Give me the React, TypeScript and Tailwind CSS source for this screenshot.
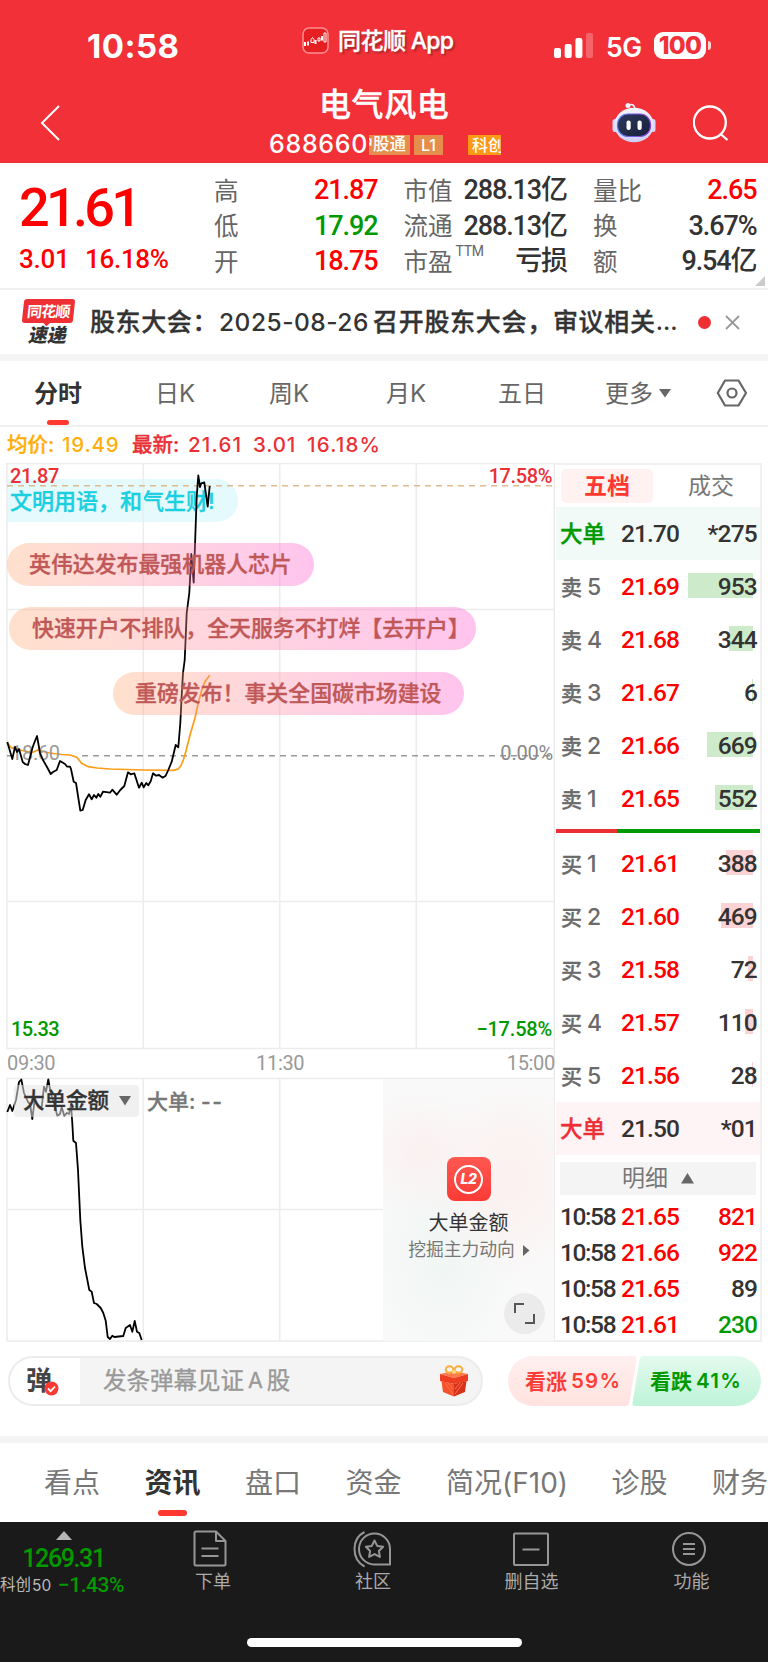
import React from "react";

const PRICE =
  "7.3,742 12.3,759 15,747 17,752 19,749 22.7,762 25,764 28,765 32.7,747 35,741 37,736 40,753 43,760 47,767 50.7,774 53,772 56.7,770 60,761 65,764 67,766.5 70,766.7 71,769 73.7,781.7 76,783 80.3,810.7 82.7,810 85.7,800 89,794.3 91.7,799.3 94,795 96.3,797.7 98.3,794 100.3,796.7 103,791.7 110,792.7 112.3,789.7 116.7,794.7 120.3,790 124.3,786 128,772.3 130.7,774.3 134.3,773.3 139,787.7 141.7,782.7 143.7,787.3 146.3,783 148.3,785.3 150.7,781.3 153,773.3 156,775.7 159,775 162.7,777.7 165.7,775.7 168.3,770 171.7,761.7 175.7,745 178.3,747.3 180.3,723.3 182,690 183,673 184.7,660 186.7,613 189.3,593 191.3,554 193.7,582.7 195.3,536.7 196.7,496.7 198.3,475.3 200,487 201.3,483.3 204.3,482.3 207.7,506.7 209.7,486";
const AVG =
  "7.3,743 11.7,748 20,750 31.7,752.7 38,750 45,752 53,753.5 62,754.5 70,755 76.7,757.3 81.7,763.3 88.3,766.7 97,768 110,769 143.3,770 173.3,770.3 178.3,769 181,765.5 183.3,760 186,751 190,735 195,718 198,704 201.7,690 205,681.7 209.7,675.3";
const BIG =
  "7.3,1112 10,1105 12.3,1111 16,1100 19,1082 21.3,1079.5 24,1093 28,1102 30,1104 32.3,1119 34.7,1100 39.3,1107 41.7,1107 44,1086.7 46,1091.7 48.3,1079.5 50.7,1093 55,1106.7 57.3,1115.7 60,1114 61.7,1107 64.3,1116 66.7,1113 69,1114 71,1105 72.3,1123 73.3,1140.7 76,1143 78,1170 80.3,1220 82.3,1246.7 85,1268 89.3,1290 91.7,1291.7 94,1303 96.7,1304 100.7,1308 103.3,1313 105.7,1320.7 107.7,1337 110,1339 112.3,1335.7 114.3,1337 123.3,1336 125.7,1328 130,1325 132.3,1331.7 134.7,1321 137,1331.7 139.3,1333 141.7,1340";

const DIN = "font-['Roboto','Noto_Sans_CJK_SC',sans-serif]";
const MID = "[-webkit-text-stroke:0.35px_currentColor]";

function Header() {
  return (
    <header className="flex h-[163px] flex-col bg-[#f23038] text-white">
      <div className="flex h-[84px] items-center pt-[3px]">
        <div className="mt-[5px] ml-[87px] w-[215px] text-[33px] leading-none font-bold tracking-[0.500px]">10:58</div>
        <svg className="-mt-[6px]" width="27" height="27" viewBox="0 0 27 27">
          <rect x="1" y="1" width="25" height="25" rx="6" fill="#e61f23" stroke="#ff8f90" strokeWidth="1.5" />
          <path d="M3 15v4M6 14.500v4M20 9v4.500" stroke="#fff" strokeWidth="2" />
          <path d="M9 12.500l1.500-2 1.500 2v3H9zM16 11h2v3h-2zM22 6h2v9h-2z" fill="none" stroke="#fff" strokeWidth="1" />
          <path d="M13.500 13v4" stroke="#fff" strokeWidth="2" />
        </svg>
        <div className={`-mt-[4px] ml-[9px] flex w-[216px] items-center gap-[5px] text-[23px] leading-none font-medium whitespace-nowrap [text-shadow:2px_2px_2px_#7a2424aa] ${MID}`}>
          <span className="tracking-[-0.400px]">同花顺</span>
          <span className="tracking-[-0.800px]">App</span>
        </div>
        <svg className="mt-[4px]" width="40" height="26" viewBox="0 0 40 26">
          <rect x="0" y="15" width="7" height="10" rx="2" fill="#fff" />
          <rect x="10.700" y="11" width="7" height="14" rx="2" fill="#fff" />
          <rect x="21.400" y="5" width="7" height="20" rx="2" fill="#fff" />
          <rect x="32" y="0" width="7" height="25" rx="2" fill="#fff" fillOpacity="0.250" />
        </svg>
        <div className="mt-[7px] ml-[12px] w-[48px] text-[26.500px] leading-none font-semibold tracking-[-0.500px]">5G</div>
        <div className="mt-[4px] flex h-[27px] w-[52px] items-center justify-center rounded-[9px] bg-white text-[24.500px] leading-none font-extrabold tracking-[-0.800px] text-[#f23038]">100</div>
        <div className="mt-[4px] ml-[2px] h-[9px] w-[3px] rounded-r-full bg-white/80" />
      </div>
      <div className="flex h-[79px] items-start">
        <svg className="mt-[21px] ml-[40px]" width="20" height="36" viewBox="0 0 20 36" fill="none" stroke="#fff" strokeWidth="2">
          <path d="M19 1L2 18l17 17" />
        </svg>
        <div className="ml-[209px] flex w-[343px] flex-col">
          <div className={`ml-[50px] h-[40px] text-[32px] leading-[41px] font-medium tracking-[0.600px] whitespace-nowrap ${MID}`}>电气风电</div>
          <div className="mt-[8px] flex h-[25px] items-center">
            <span className="w-[100px] text-[25px] leading-none font-medium tracking-[0.700px]">688660</span>
            <span className="flex h-[20px] w-[41px] items-center justify-end overflow-hidden bg-[#e58d4a] pr-[4px] text-[16.500px] leading-none font-medium whitespace-nowrap">沪股通</span>
            <span className="ml-[4px] flex h-[20px] w-[29px] items-center justify-center bg-[#e58d4a] text-[16px] leading-none font-medium">L1</span>
            <span className="ml-[25px] flex h-[20px] w-[33px] items-center overflow-hidden bg-[#fd9a14] pl-[4px] text-[16px] leading-none font-medium whitespace-nowrap">科创</span>
          </div>
        </div>
        <svg className="mt-[17px]" width="44" height="42" viewBox="0 0 44 42">
          <defs>
            <linearGradient id="face" x1="0" y1="0" x2="1" y2="1">
              <stop offset="0" stopColor="#2f3a5c" />
              <stop offset="1" stopColor="#161f3b" />
            </linearGradient>
            <linearGradient id="rim" x1="0" y1="0" x2="1" y2="0">
              <stop offset="0" stopColor="#5a7bf0" />
              <stop offset="1" stopColor="#8a3fd8" />
            </linearGradient>
            <linearGradient id="shell" x1="0" y1="0" x2="0" y2="1">
              <stop offset="0" stopColor="#f6f6ff" />
              <stop offset="1" stopColor="#cfd0f6" />
            </linearGradient>
          </defs>
          <path d="M17 4q5-2 6 4" fill="none" stroke="#eef" strokeWidth="1.600" />
          <circle cx="16" cy="4.500" r="2.500" fill="#f3f3ff" />
          <rect x="0.500" y="18" width="5" height="13" rx="2.500" fill="#d5d7f8" />
          <rect x="38.500" y="18" width="5" height="13" rx="2.500" fill="#d5d7f8" />
          <ellipse cx="22" cy="24" rx="19.800" ry="17.200" fill="url(#shell)" />
          <rect x="5.500" y="13" width="33" height="22.500" rx="10.500" fill="url(#face)" stroke="url(#rim)" strokeWidth="1.200" />
          <rect x="14.500" y="19.500" width="4.200" height="9.500" rx="2" fill="#fff" />
          <rect x="25.500" y="19.500" width="4.200" height="9.500" rx="2" fill="#fff" />
        </svg>
        <svg className="mt-[20px] ml-[37px]" width="38" height="38" viewBox="0 0 38 38" fill="none" stroke="#fff" strokeWidth="2.300">
          <circle cx="16.800" cy="18.500" r="16" />
          <path d="M27 29.500l7.500 6.500" />
        </svg>
      </div>
    </header>
  );
}

type Stat = { k: string; v: string; c: string; sup?: string };
const STATS: Stat[][] = [
  [
    { k: "高", v: "21.87", c: "text-[#ff0000]" },
    { k: "低", v: "17.92", c: "text-[#009a00]" },
    { k: "开", v: "18.75", c: "text-[#ff0000]" },
  ],
  [
    { k: "市值", v: "288.13亿", c: "text-[#333]" },
    { k: "流通", v: "288.13亿", c: "text-[#333]" },
    { k: "市盈", v: "亏损", c: "text-[#333]", sup: "TTM" },
  ],
  [
    { k: "量比", v: "2.65", c: "text-[#ff0000]" },
    { k: "换", v: "3.67%", c: "text-[#333]" },
    { k: "额", v: "9.54亿", c: "text-[#333]" },
  ],
];

function Quote() {
  return (
    <section className="relative flex h-[127px] border-b-2 border-[#efefef]">
      <div className={`ml-[19px] w-[195px] text-[#ff0000] ${DIN}`}>
        <div className="mt-[18px] h-[54px] text-[54px] leading-[54px] font-medium tracking-[-3.700px]">21.61</div>
        <div className="mt-[10px] flex h-[28px] text-[26px] leading-[28px] font-medium tracking-[-0.300px]">
          <span className="w-[66px]">3.01</span>
          <span>16.18%</span>
        </div>
      </div>
      <div className="mt-[10px] flex gap-[26px]">
        {STATS.map((col, i) => (
          <div key={i} className="w-[163.500px]">
            {col.map((s) => (
              <div key={s.k} className="flex h-[35.500px] items-center justify-between whitespace-nowrap">
                <span className="flex text-[24.500px] leading-none text-[#666]">
                  {s.k}
                  {s.sup && <sup className={`top-0 -mt-[6px] ml-[3px] self-start text-[14px] leading-none tracking-[-0.300px] ${DIN}`}>{s.sup}</sup>}
                </span>
                <span className={`text-[27px] leading-none font-medium tracking-[-1.100px] ${DIN} ${s.c}`}>{s.v}</span>
              </div>
            ))}
          </div>
        ))}
      </div>
      <svg className="absolute right-[3px] bottom-[2px]" width="10" height="10" viewBox="0 0 10 10">
        <path d="M10 0v10H0z" fill="#ccc" />
      </svg>
    </section>
  );
}

function News() {
  return (
    <section className="flex h-[71px] items-center border-b-[7px] border-[#f4f4f4] whitespace-nowrap">
      <div className="ml-[21px] flex w-[54px] flex-col items-center">
        <div className="relative flex h-[24px] w-[51px] -skew-x-6 items-center justify-center rounded-[3px] bg-[#ee2f33] text-[15px] leading-none font-bold tracking-[-0.800px] text-white">
          同花顺
          <span className="absolute -bottom-[2px] left-[22px] h-[6px] w-[6px] rotate-45 bg-[#ee2f33]" />
        </div>
        <div className="mt-[4px] -skew-x-12 text-[19px] leading-[18px] font-black text-[#333]">速递</div>
      </div>
      <div className="ml-[15px] flex w-[610px] items-center text-[25px] leading-none font-medium text-[#333]">
        <span className={`w-[129px] tracking-[0.600px] ${MID}`}>股东大会：</span>
        <span className="w-[154px] text-[24.500px] tracking-[0.500px]">2025-08-26</span>
        <span className={`tracking-[0.700px] ${MID}`}>召开股东大会，审议相关</span>
        <span className="text-[24px]">...</span>
      </div>
      <span className="-ml-[2px] h-[13px] w-[13px] rounded-full bg-[#ee3034]" />
      <svg className="ml-[14px]" width="15" height="15" viewBox="0 0 15 15" stroke="#999" strokeWidth="1.800">
        <path d="M1 1l13 13M14 1L1 14" />
      </svg>
    </section>
  );
}

function PeriodTabs() {
  return (
    <nav className="relative flex h-[66px] items-center border-b-2 border-[#f1f1f1] pt-[2px] text-[24px] leading-none whitespace-nowrap text-[#666]">
      <span className="ml-[34px] w-[121px] font-bold text-[#333]">分时</span>
      <span className="w-[114px]">日K</span>
      <span className="w-[117px]">周K</span>
      <span className="w-[112px]">月K</span>
      <span className="w-[107px]">五日</span>
      <span className="w-[54px]">更多</span>
      <svg className="-mt-[2px]" width="12" height="9" viewBox="0 0 12 9"><path d="M0 0h12L6 8.500z" fill="#666" /></svg>
      <svg className="-mt-[2px] ml-[45px]" width="32" height="30" viewBox="0 0 32 30" fill="none" stroke="#666" strokeWidth="2.200" strokeLinejoin="round">
        <path d="M9 2.500h13.500L30 15l-7.500 12.500H9L1.800 15z" />
        <circle cx="16" cy="15" r="4.500" />
      </svg>
      <span className="absolute bottom-0 left-[47px] h-[5px] w-[22px] rounded-full bg-[#ff3830]" />
    </nav>
  );
}

function Summary() {
  return (
    <div className="flex h-[36px] items-center pl-[7px] text-[20.500px] leading-none font-medium whitespace-nowrap text-[#ea3035]">
      <span className={`w-[55px] text-[#ffae0a] ${MID}`}>均价:</span>
      <span className="w-[70px] tracking-[0.800px] text-[#ffae0a]">19.49</span>
      <span className={`w-[56px] ${MID}`}>最新:</span>
      <span className="w-[65px] tracking-[1.200px]">21.61</span>
      <span className="w-[54px] tracking-[0.800px]">3.01</span>
      <span className="tracking-[1.200px]">16.18%</span>
    </div>
  );
}

function Bubble({ className, children }: { className: string; children: React.ReactNode }) {
  return (
    <div className={`absolute flex h-[43px] items-center rounded-full bg-linear-to-r from-[#ffa66d]/35 to-[#ff56ce]/35 text-[21.900px] leading-none font-medium whitespace-nowrap text-[#c05858] ${MID} ${className}`}>
      {children}
    </div>
  );
}

function Chart() {
  return (
    <div className="relative h-[880px] w-[555px] shrink-0">
      <div className={`absolute top-[16px] left-[7px] flex h-[43px] w-[231px] items-center rounded-r-full bg-[#e5fafd] pl-[3px] text-[22px] leading-none font-medium whitespace-nowrap text-[#19cfe0] ${MID}`}>
        文明用语，和气生财!
      </div>
      <svg className="absolute top-0 left-0" width="555" height="880" viewBox="0 463 555 880" fill="none">
        <g stroke="#ececec" strokeWidth="1.500">
          <path d="M6.500 463.500H555M6.500 609.500H554M6.500 901.500H554M6.500 1048.500H554M6.500 1078.500H554M6.500 1209.500H554M6.500 1341H555" />
          <path d="M7 463v585.500M143.300 463v585.500M279.700 463v585.500M416.300 463v585.500M7 1078v263M143.300 1078v263M279.700 1078v263" />
          <path d="M554.500 463v879" strokeWidth="2" />
        </g>
        <path d="M7 485.800H552" stroke="#deba90" strokeWidth="1.500" strokeDasharray="6 5" />
        <path d="M7 755.700H16M82 755.700H552" stroke="#999" strokeWidth="1.500" strokeDasharray="6 5" />
        <polyline points={AVG} stroke="#fd9c17" strokeWidth="1.700" />
      </svg>
      <div className={`text-[20px] leading-none font-medium ${DIN}`}>
        <span className="absolute top-[3px] left-[10px] tracking-[-0.400px] text-[#ea3035]">21.87</span>
        <span className="absolute top-[3px] right-[3px] tracking-[-0.400px] text-[#ea3035]">17.58%</span>
        <span className="absolute top-[280px] left-[11px] font-normal tracking-[-0.300px] text-[#999]">18.60</span>
        <span className="absolute top-[280px] right-[2px] font-normal tracking-[-0.200px] text-[#888]">0.00%</span>
        <span className="absolute top-[556px] left-[11px] tracking-[-0.600px] text-[#009a00]">15.33</span>
        <span className="absolute top-[556px] right-[3px] tracking-[-0.200px] text-[#009a00]">−17.58%</span>
        <span className="absolute top-[590px] left-[7px] font-normal tracking-[-0.300px] text-[#999]">09:30</span>
        <span className="absolute top-[590px] left-[256px] font-normal tracking-[-0.300px] text-[#999]">11:30</span>
        <span className="absolute top-[590px] right-0 font-normal tracking-[-0.300px] text-[#999]">15:00</span>
      </div>
      <svg className="absolute top-0 left-0" width="555" height="880" viewBox="0 463 555 880" fill="none" stroke="#000" strokeWidth="1.800" strokeLinejoin="round">
        <polyline points={PRICE} />
        <polyline points={BIG} />
      </svg>
      <Bubble className="top-[80px] left-[7px] w-[307px] pl-[22px]">英伟达发布最强机器人芯片</Bubble>
      <Bubble className="top-[144px] left-[9px] w-[467px] pl-[23px]">快速开户不排队，全天服务不打烊【去开户】</Bubble>
      <Bubble className="top-[209px] left-[113px] w-[351px] pl-[22px]">重磅发布！事关全国碳市场建设</Bubble>
      <div className={`absolute top-[622px] left-[14px] flex h-[32px] w-[125px] items-center rounded-[4px] bg-[#e4e4e4]/55 pl-[9px] text-[21.500px] leading-none font-medium whitespace-nowrap text-[#333] ${MID}`}>
        大单金额
        <svg className="ml-[10px]" width="12" height="10" viewBox="0 0 12 10"><path d="M0 0h12L6 9.500z" fill="#666" /></svg>
      </div>
      <div className={`absolute top-[628px] left-[147px] text-[21px] leading-none font-medium whitespace-nowrap text-[#777] ${MID}`}>大单: <span className="tracking-[1.500px]">--</span></div>
      <Promo />
    </div>
  );
}

function Promo() {
  return (
    <div className="absolute top-[616px] left-[383px] flex h-[262px] w-[171px] flex-col items-center overflow-hidden bg-[#f9f9f9] bg-[radial-gradient(circle_at_22%_28%,#fbf1f1_0,transparent_28%),radial-gradient(ellipse_at_75%_38%,#fcf0ef_0,transparent_45%),radial-gradient(ellipse_at_35%_66%,#f0f6f4_0,transparent_50%)] pt-[78px]">
      <div className="flex h-[44px] w-[44px] items-center justify-center rounded-[8px] bg-linear-to-b from-[#ff5751] to-[#fb3a35]">
        <div className="flex h-[29px] w-[29px] items-center justify-center rounded-full border-2 border-white text-[14px] leading-none font-extrabold tracking-[-0.500px] text-white italic">L2</div>
      </div>
      <div className="mt-[11px] text-[20px] leading-[22px] text-[#333]">大单金额</div>
      <div className="mt-[6px] flex items-center pl-[1px] text-[17.800px] leading-[20px] whitespace-nowrap text-[#777]">
        挖掘主力动向
        <svg className="ml-[8px]" width="7" height="11" viewBox="0 0 7 11"><path d="M0 0l6.500 5.500L0 11z" fill="#666" /></svg>
      </div>
      <div className="absolute right-[9px] bottom-[7px] flex h-[41px] w-[41px] items-center justify-center rounded-full bg-[#ebebeb]">
        <svg width="21" height="21" viewBox="0 0 21 21" fill="none" stroke="#555" strokeWidth="2">
          <path d="M1 10V1h9M20 11v9h-9" />
        </svg>
      </div>
    </div>
  );
}

type Level = { k: string; n: string; p: string; v: string; bar: number };
const SELL: Level[] = [
  { k: "卖", n: "5", p: "21.69", v: "953", bar: 65 },
  { k: "卖", n: "4", p: "21.68", v: "344", bar: 24 },
  { k: "卖", n: "3", p: "21.67", v: "6", bar: 1 },
  { k: "卖", n: "2", p: "21.66", v: "669", bar: 46 },
  { k: "卖", n: "1", p: "21.65", v: "552", bar: 38 },
];
const BUY: Level[] = [
  { k: "买", n: "1", p: "21.61", v: "388", bar: 27 },
  { k: "买", n: "2", p: "21.60", v: "469", bar: 32 },
  { k: "买", n: "3", p: "21.58", v: "72", bar: 5 },
  { k: "买", n: "4", p: "21.57", v: "110", bar: 8 },
  { k: "买", n: "5", p: "21.56", v: "28", bar: 1 },
];

function LevelRow({ l, tint }: { l: Level; tint: string }) {
  return (
    <div className="relative flex h-[53.100px] shrink-0 items-center pt-px pr-[4px] pl-[5px] leading-none font-medium">
      <span className={`w-[26px] text-[21px] text-[#6a6a6a] ${MID}`}>{l.k}</span>
      <span className="w-[34px] text-[23px] text-[#6a6a6a]">{l.n}</span>
      <span className={`flex-1 text-[24.500px] tracking-[-0.900px] text-[#ff0000] ${DIN}`}>{l.p}</span>
      <span className={`absolute top-[13px] right-[7px] h-[25px] ${tint}`} style={{ width: l.bar }} />
      <span className={`relative -mr-px text-[24.500px] tracking-[-0.800px] text-[#333] ${DIN}`}>{l.v}</span>
    </div>
  );
}

function BigRow({ bg, color, p, v }: { bg: string; color: string; p: string; v: string }) {
  return (
    <div className={`flex h-[53px] shrink-0 items-center pt-px pr-[4px] pl-[4px] leading-none font-medium ${bg}`}>
      <span className={`w-[61px] text-[22.500px] ${MID} ${color}`}>大单</span>
      <span className={`flex-1 text-[24.500px] tracking-[-0.900px] text-[#333] ${DIN}`}>{p}</span>
      <span className={`-mr-px text-[24.500px] tracking-[-0.800px] text-[#333] ${DIN}`}>{v}</span>
    </div>
  );
}

const TRADES = [
  { p: "21.65", v: "821", c: "text-[#ff0000]" },
  { p: "21.66", v: "922", c: "text-[#ff0000]" },
  { p: "21.65", v: "89", c: "text-[#333]" },
  { p: "21.61", v: "230", c: "text-[#009a00]" },
];

function OrderBook() {
  return (
    <div className="flex h-[879px] w-[207px] flex-col border-t-2 border-r-2 border-b-2 border-[#f0f0f0] pl-px">
      <div className="flex h-[42px] shrink-0 items-center text-[23px] leading-none">
        <span className="ml-[5px] flex h-[34px] w-[92px] items-center justify-center rounded-[5px] bg-[#fff2f1] font-bold text-[#ff3830]">五档</span>
        <span className="ml-[35px] text-[#777]">成交</span>
      </div>
      <BigRow bg="bg-[#f1faf6]" color="text-[#009a00]" p="21.70" v="*275" />
      {SELL.map((l) => <LevelRow key={l.n} l={l} tint="bg-[#cdebcb]" />)}
      <div className="mt-[3.500px] mb-[4px] flex h-[4px] shrink-0">
        <div className="w-[61px] bg-[#ea3035]" />
        <div className="flex-1 bg-[#009a00]" />
      </div>
      {BUY.map((l) => <LevelRow key={l.n} l={l} tint="bg-[#fbd3d4]" />)}
      <BigRow bg="bg-[#fff4f5]" color="text-[#ea3035]" p="21.50" v="*01" />
      <div className="mt-[7px] mr-[4px] mb-[3px] ml-[4px] flex h-[33px] shrink-0 items-center justify-center bg-[#f4f4f4] text-[23px] leading-none text-[#777]">
        明细
        <svg className="ml-[13px]" width="13" height="11" viewBox="0 0 13 11"><path d="M6.500 0L13 10.500H0z" fill="#666" /></svg>
      </div>
      {TRADES.map((t, i) => (
        <div key={i} className={`flex h-[36px] shrink-0 items-center pt-[2px] pr-[3px] pl-[4px] text-[24.500px] leading-none font-medium tracking-[-0.900px] ${DIN}`}>
          <span className="w-[61px] tracking-[-1.400px] text-[#333]">10:58</span>
          <span className="flex-1 text-[#ff0000]">{t.p}</span>
          <span className={t.c}>{t.v}</span>
        </div>
      ))}
    </div>
  );
}

function Gift() {
  return (
    <svg width="30" height="32" viewBox="0 0 30 32">
      <path d="M1 9l14-3 14 3-14 4z" fill="#ff7a4a" />
      <path d="M1 9l14 4v6L1 16zM29 9l-14 4v6l14-3z" fill="#ee3e22" />
      <path d="M2.500 16L15 19v12.500L4 27z" fill="#f4512c" />
      <path d="M27.500 16L15 19v12.500L26 27z" fill="#d5321d" />
      <path d="M6 18l8 11M9 18l5 6M24 18l-8 11M21 18l-5 6" stroke="#ff7345" strokeWidth="1" />
      <ellipse cx="10.500" cy="4.500" rx="3.800" ry="3.200" fill="none" stroke="#f9ad3a" strokeWidth="2" />
      <ellipse cx="19.500" cy="4.500" rx="3.800" ry="3.200" fill="none" stroke="#f9ad3a" strokeWidth="2" />
      <circle cx="15" cy="7" r="2" fill="#ffd98a" />
    </svg>
  );
}

function CommentBar() {
  return (
    <div className="flex h-[100px] items-start border-b-[7px] border-[#f4f4f4] pt-[13px] whitespace-nowrap">
      <div className="ml-[8px] flex h-[50px] w-[475px] items-center overflow-hidden rounded-full border-2 border-[#ececec] bg-[#f4f4f4] leading-none">
        <div className="relative flex h-full w-[70px] items-center bg-white pl-[16px] text-[26px] font-bold text-[#444]">
          弹
          <svg className="absolute top-[23px] left-[34px]" width="15" height="15" viewBox="0 0 15 15">
            <circle cx="7.500" cy="7.500" r="7" fill="#fb3a33" />
            <path d="M4 7.500l2.700 2.700L11 5.500" fill="none" stroke="#fff" strokeWidth="1.800" />
          </svg>
        </div>
        <div className={`ml-[23px] flex w-[336px] items-center gap-[4px] text-[23.500px] text-[#999] ${MID}`}><span>发条弹幕见证</span><span className="text-[21.500px]">A</span><span>股</span></div>
        <Gift />
      </div>
      <div className="relative ml-[25px] flex h-[50px] w-[253px]">
        <svg className="absolute inset-0" width="253" height="50" viewBox="0 0 253 50">
          <defs>
            <linearGradient id="up" x1="0" y1="0" x2="0" y2="1"><stop offset="0" stopColor="#fff0ef" /><stop offset="1" stopColor="#ffe2df" /></linearGradient>
            <linearGradient id="down" x1="0" y1="0" x2="0" y2="1"><stop offset="0" stopColor="#e3faee" /><stop offset="1" stopColor="#bff3d8" /></linearGradient>
          </defs>
          <path d="M25 0H126q3 0 2.500 3L121.500 46q-.8 4-4 4H25a25 25 0 0 1 0-50z" fill="url(#up)" />
          <path d="M136 0h92a25 25 0 0 1 0 50H127q-3 0-2.500-3L131.500 4q.8-4 4.500-4z" fill="url(#down)" />
        </svg>
        <div className="relative flex h-full w-[142px] items-center pl-[17px] text-[21px] leading-none font-bold text-[#fb3f38]">看涨<span className="ml-[4px] text-[20.500px] font-semibold tracking-[1.200px]">59%</span></div>
        <div className="relative flex h-full items-center text-[21px] leading-none font-bold text-[#009a00]">看跌<span className="ml-[4px] text-[20.500px] font-semibold tracking-[1.300px]">41%</span></div>
      </div>
    </div>
  );
}

function SectionTabs() {
  return (
    <nav className="flex h-[79px] items-center gap-[44.500px] overflow-hidden pl-[44px] text-[28px] leading-none whitespace-nowrap text-[#777]">
      <span>看点</span>
      <span className="relative font-bold text-[#333]">
        资讯
        <span className="absolute top-[41px] left-[13px] h-[6px] w-[29px] rounded-full bg-[#ff3830]" />
      </span>
      <span>盘口</span>
      <span>资金</span>
      <span className="w-[121px]">简况(F10)</span>
      <span>诊股</span>
      <span>财务</span>
    </nav>
  );
}

function Footer() {
  return (
    <footer className="flex h-[140px] flex-col bg-[#1a1a1a] text-[#aaa]">
      <div className="flex h-[116px] text-[18px] leading-none whitespace-nowrap">
        <div className={`flex w-[127px] flex-col items-center ${DIN}`}>
          <svg className="mt-[9px]" width="16" height="9" viewBox="0 0 16 9"><path d="M8 0l8 9H0z" fill="#b5b5b5" /></svg>
          <div className="mt-[6px] text-[25px] leading-[25px] font-medium tracking-[-1.400px] text-[#009a00]">1269.31</div>
          <div className="mt-[4px] flex w-full items-center">
            <span className="w-[32px] text-[15.500px] text-[#bbb]">科创</span>
            <span className="w-[26px] font-['Inter'] text-[15.500px] text-[#bbb]">50</span>
            <span className="text-[21px] font-medium tracking-[-0.500px] text-[#009a00]">−1.43%</span>
          </div>
        </div>
        <div className="ml-[66px] flex w-[36px] flex-col items-center">
          <svg className="mt-[8px]" width="36" height="37" viewBox="0 0 36 37" fill="none" stroke="#969696" strokeWidth="2" strokeLinejoin="round">
            <path d="M23 1.500H3Q1.500 1.500 1.500 3v31Q1.500 35.500 3 35.500h28q1.500 0 1.500-1.500V11zM23 1.500V11h9.500M8.500 18.500h17M8.500 26h17" />
          </svg>
          <span className="mt-[6px] ml-[4px]">下单</span>
        </div>
        <div className="ml-[123px] flex w-[40px] flex-col items-center">
          <svg className="mt-[8px]" width="40" height="38" viewBox="0 0 40 38" fill="none" stroke="#969696" strokeWidth="2" strokeLinejoin="round">
            <path d="M12.500 2Q2.500 7 2.500 19t10 17.500" />
            <path d="M38 19v15.500H22A15.500 15.500 0 1 1 38 19z" />
            <path d="M22.500 10.500l2.700 5.400 5.900.900-4.200 4.200 1 5.900-5.400-2.800-5.400 2.800 1-5.900-4.200-4.200 5.900-.900z" />
          </svg>
          <span className="mt-[5px] ml-[2px]">社区</span>
        </div>
        <div className="ml-[111px] flex w-[56px] flex-col items-center">
          <svg className="mt-[10px]" width="38" height="35" viewBox="0 0 38 35" fill="none" stroke="#969696" strokeWidth="2">
            <rect x="2" y="1.500" width="34" height="31.500" rx="1" />
            <path d="M10.500 17.500h17" />
          </svg>
          <span className="mt-[6px] -mr-px">删自选</span>
        </div>
        <div className="ml-[112px] flex w-[38px] flex-col items-center">
          <svg className="mt-[9px]" width="38" height="36" viewBox="0 0 38 36" fill="none" stroke="#969696" strokeWidth="2">
            <circle cx="18" cy="18" r="16" />
            <path d="M12 13h12M12 18h12M12 23h12" />
          </svg>
          <span className="mt-[6px] ml-[3px]">功能</span>
        </div>
      </div>
      <div className="ml-[247px] h-[9px] w-[275px] rounded-full bg-white" />
    </footer>
  );
}

export default function App() {
  return (
    <main className="h-[1662px] w-[768px] overflow-hidden bg-white font-['Inter','Noto_Sans_CJK_SC',sans-serif]">
      <Header />
      <Quote />
      <News />
      <PeriodTabs />
      <Summary />
      <div className="flex h-[880px] items-start">
        <Chart />
        <OrderBook />
      </div>
      <CommentBar />
      <SectionTabs />
      <Footer />
    </main>
  );
}
